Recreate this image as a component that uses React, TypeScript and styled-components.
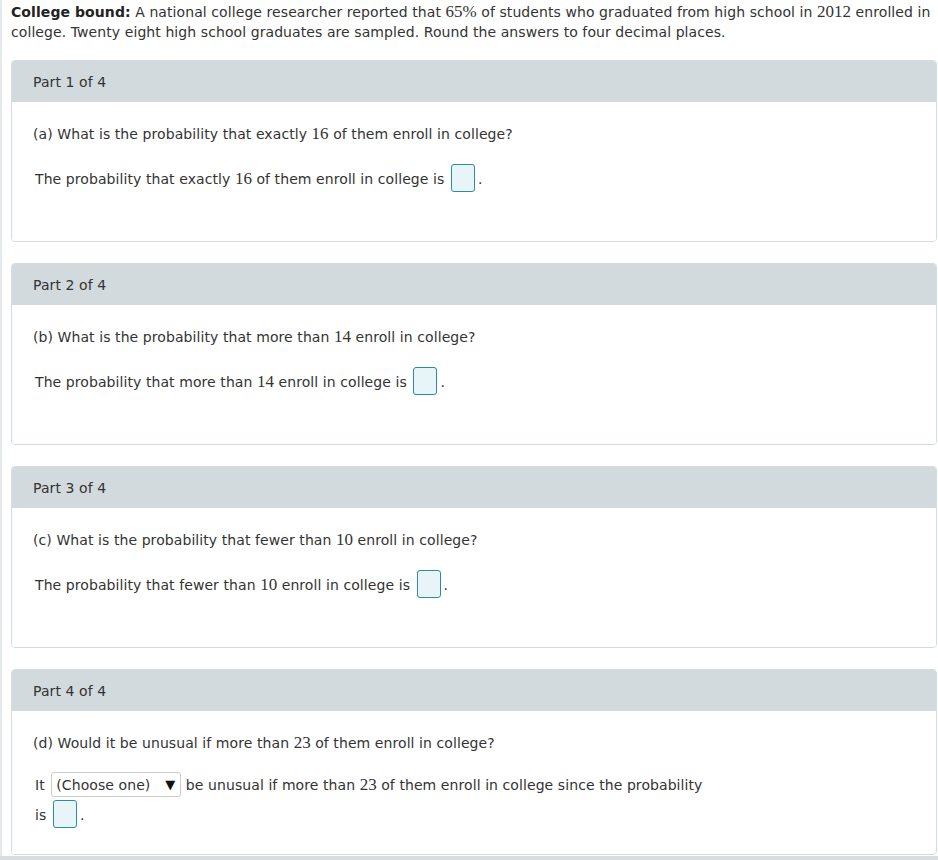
import * as React from "react";
import styled, { createGlobalStyle } from "styled-components";

const GlobalStyle = createGlobalStyle`
  html, body {
    margin: 0;
    padding: 0;
    background: #ffffff;
  }
  body {
    font-family: "DejaVu Sans", Verdana, sans-serif;
    font-size: 14px;
    letter-spacing: 0.08px;
    color: #333333;
  }
`;

const parts = [
  {
    label: "Part 1 of 4",
    question: ["(a) What is the probability that exactly ", "16", " of them enroll in college?"],
    answer: ["The probability that exactly ", "16", " of them enroll in college is"],
  },
  {
    label: "Part 2 of 4",
    question: ["(b) What is the probability that more than ", "14", " enroll in college?"],
    answer: ["The probability that more than ", "14", " enroll in college is"],
  },
  {
    label: "Part 3 of 4",
    question: ["(c) What is the probability that fewer than ", "10", " enroll in college?"],
    answer: ["The probability that fewer than ", "10", " enroll in college is"],
  },
];

const App = () => {
  return (
    <>
      <GlobalStyle />
      <Page>
        <Intro>
          <b>College bound:</b> A national college researcher reported that <Num>65%</Num> of
          students who graduated from high school in <Num>2012</Num> enrolled in college. Twenty
          eight high school graduates are sampled. Round the answers to four decimal places.
        </Intro>

        {parts.map((p) => (
          <Card key={p.label}>
            <CardHeader>{p.label}</CardHeader>
            <CardBody>
              <Question>
                {p.question[0]}
                <Num>{p.question[1]}</Num>
                {p.question[2]}
              </Question>
              <Answer>
                {p.answer[0]}
                <Num>{p.answer[1]}</Num>
                {p.answer[2]} <AnswerBox />.
              </Answer>
            </CardBody>
          </Card>
        ))}

        <Card $last>
          <CardHeader>Part 4 of 4</CardHeader>
          <CardBody>
            <Question>
              (d) Would it be unusual if more than <Num>23</Num> of them enroll in college?
            </Question>
            <Answer $wrap>
              It{" "}
              <Select>
                (Choose one)<Caret>▼</Caret>
              </Select>{" "}
              be unusual if more than <Num>23</Num> of them enroll in college since the
              probability is <AnswerBox />.
            </Answer>
          </CardBody>
        </Card>
      </Page>
      <BottomStrip />
    </>
  );
};

export default App;

const Page = styled.div`
  border-left: 2px solid #e3e9eb;
  padding: 2px 0 0 9px;
  height: 856px;
  box-sizing: border-box;
  overflow: hidden;
`;

const Intro = styled.p`
  margin: 0 0 18px;
  font-size: 14px;
  line-height: 20px;
  color: #333;
  b {
    color: #222;
  }
`;

const Num = styled.span`
  font-family: "Liberation Serif", "Times New Roman", serif;
  font-size: 17px;
  letter-spacing: 0;
  line-height: 1;
`;

const Card = styled.section<{ $last?: boolean }>`
  width: 926px;
  border: 1px solid #d3dde0;
  border-radius: 4px;
  overflow: hidden;
  margin-bottom: ${(p) => (p.$last ? "0" : "21px")};
  box-sizing: border-box;
`;

const CardHeader = styled.div`
  background: #d2dadd;
  height: 41px;
  display: flex;
  align-items: center;
  padding-left: 21px;
  font-size: 14px;
  color: #333;
`;

const CardBody = styled.div`
  background: #fff;
  min-height: 139px;
  box-sizing: border-box;
  padding: 22px 21px 24px;
`;

const Question = styled.p`
  margin: 0 0 20px;
  line-height: 20px;
`;

const Answer = styled.p<{ $wrap?: boolean }>`
  margin: ${(p) => (p.$wrap ? "-3px 0 0" : "0")};
  padding-left: 2px;
  line-height: 30px;
  max-width: ${(p) => (p.$wrap ? "672px" : "none")};
`;

const AnswerBox = styled.span`
  display: inline-block;
  width: 22px;
  height: 26px;
  vertical-align: middle;
  margin: -4px 3px 0 2px;
  background: #e7f4f8;
  border: 1px solid #2b8c9b;
  border-radius: 3px;
`;

const Select = styled.span`
  display: inline-flex;
  align-items: center;
  height: 23px;
  width: 124px;
  box-sizing: content-box;
  padding-left: 4px;
  margin: -3px 0 0 2px;
  border: 1px solid #cccccc;
  border-radius: 3px;
  vertical-align: middle;
  font-size: 14px;
  color: #333;
`;

const Caret = styled.span`
  margin-left: auto;
  margin-right: 5px;
  font-size: 13px;
  color: #111;
`;

const BottomStrip = styled.div`
  height: 4px;
  background: #d6dee0;
`;
